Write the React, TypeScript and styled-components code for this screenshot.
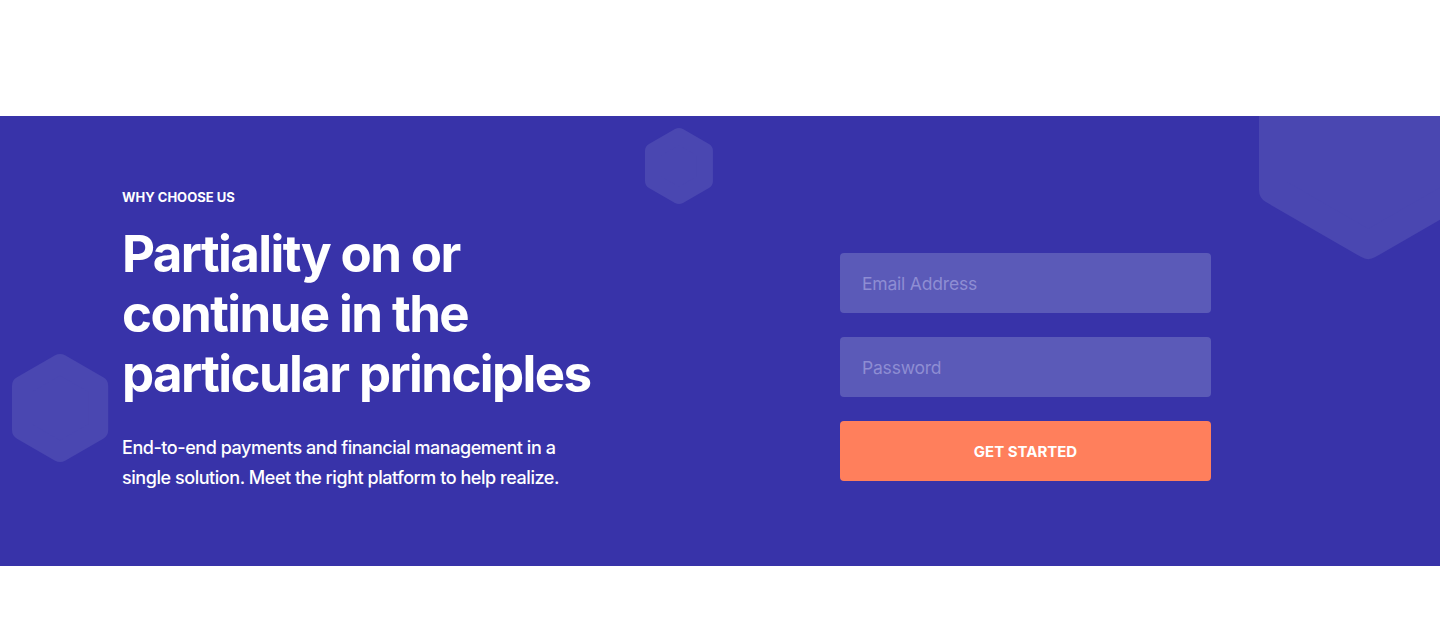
import React from "react";
import styled, { createGlobalStyle } from "styled-components";

const GlobalStyle = createGlobalStyle`
  html, body { margin: 0; padding: 0; background: #ffffff; }
  body { font-family: Inter, "Noto Sans", sans-serif; }
  * { box-sizing: border-box; }
`;

const Page = styled.div`
  padding-top: 116px;
  padding-bottom: 77px;
  background: #ffffff;
`;

const Band = styled.section`
  position: relative;
  overflow: hidden;
  height: 450px;
  background: #3833a9;
`;

const Container = styled.div`
  position: relative;
  z-index: 1;
  width: 1196px;
  margin: 0 auto;
  padding: 72px 0 0 0;
  display: flex;
  justify-content: space-between;
  align-items: flex-start;
`;

const Intro = styled.div`
  width: 500px;
  display: flex;
  flex-direction: column;
`;

const Eyebrow = styled.span`
  font-size: 13px;
  font-weight: 700;
  line-height: 18px;
  color: #ffffff;
  letter-spacing: 0;
  text-transform: uppercase;
`;

const Heading = styled.h2`
  margin: 18px 0 0;
  font-size: 51px;
  font-weight: 700;
  line-height: 60px;
  letter-spacing: -1.6px;
  color: #ffffff;
`;

const Lead = styled.p`
  margin: 29px 0 0;
  width: 466px;
  font-size: 18px;
  font-weight: 500;
  line-height: 30px;
  letter-spacing: -0.45px;
  color: #ffffff;
`;

const Form = styled.form`
  width: 371px;
  margin: 65px 107px 0 0;
  display: flex;
  flex-direction: column;
  gap: 24px;
`;

const Field = styled.input`
  height: 60px;
  width: 100%;
  border: none;
  border-radius: 4px;
  padding: 0 22px;
  background: #5b5ab8;
  color: #ffffff;
  font-family: Inter, "Noto Sans", sans-serif;
  font-size: 17.5px;
  letter-spacing: -0.2px;
  outline: none;
  &::placeholder { color: #8e8dd3; }
`;

const Submit = styled.button`
  height: 60px;
  width: 100%;
  border: none;
  border-radius: 4px;
  background: #ff7f5c;
  color: #ffffff;
  font-family: Inter, "Noto Sans", sans-serif;
  font-size: 15px;
  font-weight: 700;
  letter-spacing: 0;
  text-transform: uppercase;
  cursor: pointer;
`;

const Deco = styled.svg<{ $left: number; $top: number }>`
  position: absolute;
  left: ${(p) => p.$left}px;
  top: ${(p) => p.$top}px;
  z-index: 0;
  overflow: visible;
`;

function hexPoints(cx: number, cy: number, R: number) {
  const pts: string[] = [];
  for (let i = 0; i < 6; i++) {
    const a = (Math.PI / 3) * i - Math.PI / 2;
    pts.push(`${cx + R * Math.cos(a)},${cy + R * Math.sin(a)}`);
  }
  return pts.join(" ");
}

function Hexagon({ left, top, R, r }: { left: number; top: number; R: number; r: number }) {
  const halfW = (R * Math.sqrt(3)) / 2 + r;
  const halfH = R + r;
  const w = halfW * 2;
  const h = halfH * 2;
  return (
    <Deco $left={left} $top={top} width={w} height={h} viewBox={`0 0 ${w} ${h}`} aria-hidden>
      <polygon
        points={hexPoints(halfW, halfH, R)}
        fill="#4a47b1"
        stroke="#4a47b1"
        strokeWidth={r * 2}
        strokeLinejoin="round"
      />
    </Deco>
  );
}

export default function App() {
  return (
    <>
      <GlobalStyle />
      <Page>
        <Band>
          <Hexagon left={645} top={12} R={30} r={8} />
          <Hexagon left={12} top={238} R={44} r={10} />
          <Hexagon left={1259} top={-105} R={110} r={14} />
          <Container>
            <Intro>
              <Eyebrow>Why choose us</Eyebrow>
              <Heading>
                Partiality on or
                <br />
                continue in the
                <br />
                particular principles
              </Heading>
              <Lead>
                End-to-end payments and financial management in a single solution. Meet the right
                platform to help realize.
              </Lead>
            </Intro>
            <Form onSubmit={(e) => e.preventDefault()}>
              <Field type="email" placeholder="Email Address" />
              <Field type="password" placeholder="Password" />
              <Submit type="submit">Get Started</Submit>
            </Form>
          </Container>
        </Band>
      </Page>
    </>
  );
}
